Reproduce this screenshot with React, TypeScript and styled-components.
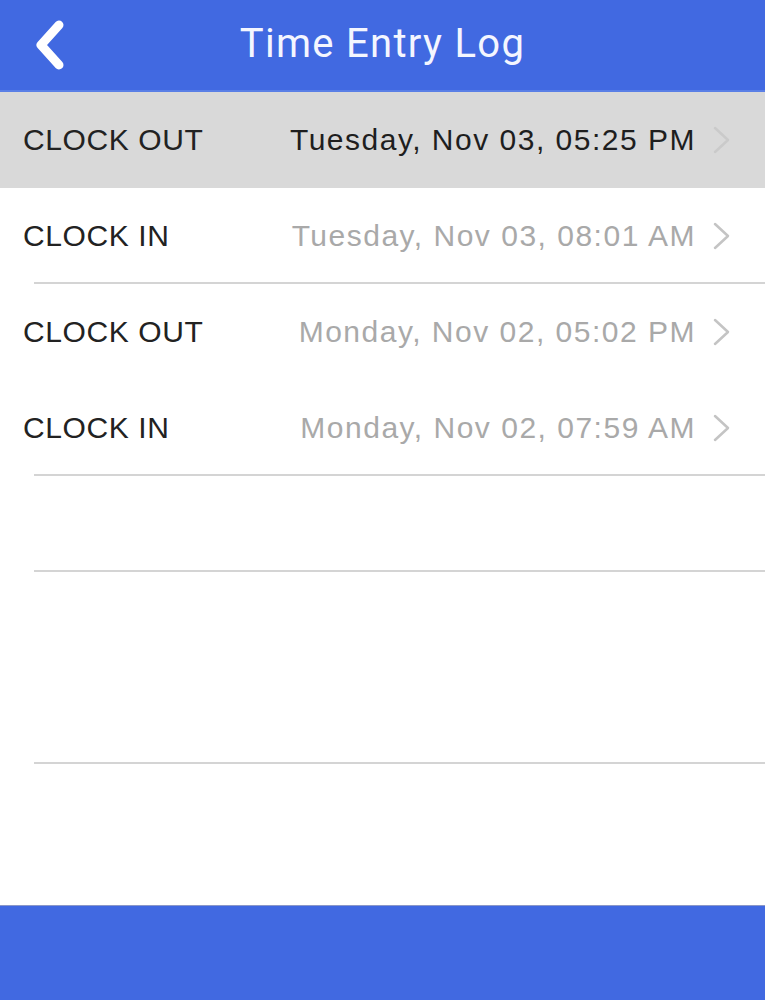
import React from 'react';
import styled, { createGlobalStyle } from 'styled-components';

const GlobalStyle = createGlobalStyle`
  html, body {
    margin: 0;
    padding: 0;
    height: 100%;
    background: #ffffff;
  }
  #root {
    height: 100%;
  }
`;

const Screen = styled.div`
  height: 100vh;
  display: flex;
  flex-direction: column;
  font-family: 'Liberation Sans', Arial, sans-serif;
  overflow: hidden;
`;

const NavBar = styled.header`
  height: 90px;
  flex-shrink: 0;
  background: #4169e1;
  border-bottom: 2px solid #5a7fe6;
  display: flex;
  align-items: center;
  justify-content: center;
  position: relative;
`;

const BackButton = styled.button`
  position: absolute;
  left: 26px;
  top: 15px;
  width: 50px;
  height: 60px;
  padding: 0;
  border: none;
  background: transparent;
  display: flex;
  align-items: center;
  justify-content: center;
  cursor: pointer;
`;

const Title = styled.h1`
  margin: 0;
  color: #f4f6ff;
  font-family: Roboto, 'Liberation Sans', sans-serif;
  font-weight: 400;
  font-size: 40px;
  letter-spacing: 1.3px;
  padding-bottom: 4px;
`;

const List = styled.ul`
  flex: 1;
  margin: 0;
  padding: 0;
  list-style: none;
  overflow: hidden;
`;

const Row = styled.li<{ $selected?: boolean; $line?: boolean }>`
  height: 96px;
  box-sizing: border-box;
  position: relative;
  display: flex;
  align-items: center;
  padding: 0 32px 0 23px;
  background: ${(p) => (p.$selected ? '#d9d9d9' : '#ffffff')};

  &::after {
    content: '';
    display: ${(p) => (p.$line ? 'block' : 'none')};
    position: absolute;
    left: 34px;
    right: 0;
    bottom: 0;
    height: 2px;
    background: #d4d4d4;
  }
`;

const Label = styled.span`
  color: #222222;
  font-size: 30px;
  letter-spacing: 0.6px;
`;

const Stamp = styled.span<{ $selected?: boolean }>`
  margin-left: auto;
  color: ${(p) => (p.$selected ? '#1e1e1e' : '#a9a9a9')};
  font-size: 30px;
  letter-spacing: 1.5px;
`;

const Chevron = styled.svg<{ $selected?: boolean }>`
  margin-left: 15px;
  width: 22px;
  height: 28px;
  flex-shrink: 0;
  color: ${(p) => (p.$selected ? '#cacaca' : '#c4c4c4')};
`;

const Footer = styled.footer`
  height: 94px;
  flex-shrink: 0;
  background: #4169e1;
  border-top: 1px solid #8a97c8;
`;

type Entry = { kind?: string; time?: string; selected?: boolean; line?: boolean };

const entries: Entry[] = [
  { kind: 'CLOCK OUT', time: 'Tuesday, Nov 03, 05:25 PM', selected: true },
  { kind: 'CLOCK IN', time: 'Tuesday, Nov 03, 08:01 AM', line: true },
  { kind: 'CLOCK OUT', time: 'Monday, Nov 02, 05:02 PM' },
  { kind: 'CLOCK IN', time: 'Monday, Nov 02, 07:59 AM', line: true },
  { line: true },
  {},
  { line: true },
  {},
  {},
];

export default function App() {
  return (
    <>
      <GlobalStyle />
      <Screen>
        <NavBar>
          <BackButton aria-label="Back">
            <svg width="44" height="56" viewBox="0 0 44 56">
              <path
                d="M30 8 L12 28 L30 48"
                fill="none"
                stroke="#ffffff"
                strokeWidth="9"
                strokeLinecap="round"
                strokeLinejoin="round"
              />
            </svg>
          </BackButton>
          <Title>Time Entry Log</Title>
        </NavBar>
        <List>
          {entries.map((e, i) => (
            <Row key={i} $selected={e.selected} $line={e.line}>
              {e.kind && (
                <>
                  <Label>{e.kind}</Label>
                  <Stamp $selected={e.selected}>{e.time}</Stamp>
                  <Chevron $selected={e.selected} viewBox="0 0 22 28">
                    <path
                      d="M4 2 L17 14 L4 26"
                      fill="none"
                      stroke="currentColor"
                      strokeWidth="2.5"
                      strokeLinecap="round"
                      strokeLinejoin="round"
                    />
                  </Chevron>
                </>
              )}
            </Row>
          ))}
        </List>
        <Footer />
      </Screen>
    </>
  );
}
